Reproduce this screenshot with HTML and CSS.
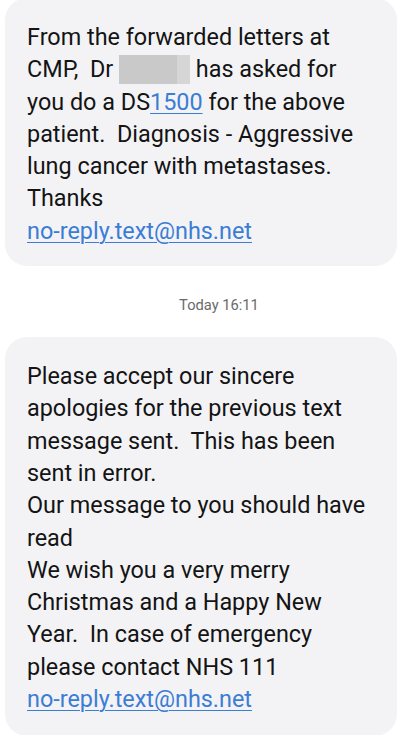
FILE: index.html
```html
<!DOCTYPE html>
<html>
<head>
<meta charset="utf-8">
<link rel="stylesheet" href="styles.css">
</head>
<body>
<div class="thread">
  <div class="bubble bubble-first">
    <p class="msg">From the forwarded letters at<br>CMP,&nbsp; Dr <span class="redact"></span> has asked for<br>you do a DS<a class="link" href="#">1500</a> for the above<br>patient.&nbsp; Diagnosis - Aggressive<br>lung cancer with metastases.<br>Thanks<br><a class="link" href="#">no-reply.text@nhs.net</a></p>
  </div>
  <div class="stamp">Today 16:11</div>
  <div class="bubble bubble-second">
    <p class="msg">Please accept our sincere<br>apologies for the previous text<br>message sent.&nbsp; This has been<br>sent in error.<br>Our message to you should have<br>read<br>We wish you a very merry<br>Christmas and a Happy New<br>Year.&nbsp; In case of emergency<br>please contact NHS 111<br><a class="link" href="#">no-reply.text@nhs.net</a></p>
  </div>
</div>
</body>
</html>
```

FILE: styles.css
```css
html, body {
  margin: 0;
  padding: 0;
  background: #ffffff;
}
.thread {
  display: flex;
  flex-direction: column;
  padding: 0 5px;
  font-family: Roboto, "Noto Sans", sans-serif;
}
.bubble {
  background: #f3f3f6;
  border-radius: 22px;
  padding: 21px 22px 19px 22px;
}
.bubble-first {
  margin-top: -2px;
  padding-top: 23px;
}
.msg {
  margin: 0;
  font-size: 23.4px;
  line-height: 32.3px;
  color: #141414;
  white-space: nowrap;
}
.link {
  color: #3b7dd4;
  text-decoration: underline;
  text-decoration-thickness: 1px;
  text-underline-offset: 3px;
}
.redact {
  display: inline-block;
  width: 71px;
  height: 29px;
  vertical-align: -7px;
  background: linear-gradient(to right, #c9c9c9 0, #c9c9c9 58px, #d6d6d6 58px);
}
.stamp {
  text-align: center;
  font-size: 14.7px;
  color: #6a6a6a;
  padding: 30px 0 23px 36px;
  line-height: 18px;
}
.bubble-second {
  padding-top: 23px;
  padding-bottom: 21px;
}
```
